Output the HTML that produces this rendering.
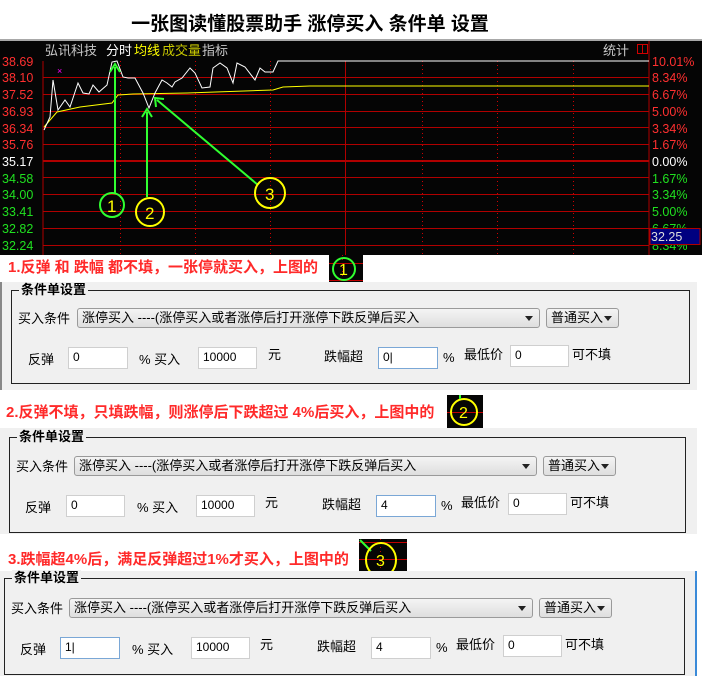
<!DOCTYPE html>
<html><head><meta charset="utf-8"><style>
*{margin:0;padding:0;box-sizing:border-box}
body{width:702px;height:690px;background:#fff;position:relative;overflow:hidden;font-family:"Liberation Sans","Noto Sans CJK SC",sans-serif;}
.abs{position:absolute}
.title{left:0;width:620px;top:9px;text-align:center;font-size:19px;font-weight:bold;color:#000;}
.cap{font-size:15px;font-weight:bold;color:#ff2a2a;white-space:nowrap;line-height:18px}
.panel{background:#f0f0f0;left:0;width:697px}
.grp{border:1px solid #222;}
.glab{position:absolute;left:7px;top:-9px;background:#f0f0f0;padding:0 2px;font-size:13px;font-weight:bold;line-height:16px}
.t{position:absolute;font-size:13px;line-height:16px;white-space:nowrap;color:#000}
.combo{position:absolute;height:20px;border:1px solid #9a9a9a;border-radius:3px;background:linear-gradient(#f4f4f4,#dedede);font-size:13px;line-height:18px;padding-left:4px;white-space:nowrap}
.combo:after{content:"";position:absolute;right:6px;top:7px;border-left:4px solid transparent;border-right:4px solid transparent;border-top:5px solid #222}
.inp{position:absolute;height:22px;border:1px solid #cfcfcf;background:#fff;font-size:12px;line-height:18px;padding-left:4px}
.inp.f{border-color:#7aa7d6}
</style></head><body>
<div class="abs title">一张图读懂股票助手 涨停买入 条件单 设置</div>

<svg class="abs" style="left:0;top:39px" width="702" height="216" viewBox="0 39 702 216">
<rect x="0" y="39" width="702" height="216" fill="#050505"/>
<rect x="0" y="39" width="702" height="2" fill="#a8a8a8"/>
<g fill="none" stroke="#b00000" stroke-width="1">
<line x1="43" y1="61" x2="43" y2="255"/>
<line x1="649" y1="41" x2="649" y2="255"/>
<line x1="43" y1="77.5" x2="649" y2="77.5"/><line x1="43" y1="94.5" x2="649" y2="94.5"/>
<line x1="43" y1="111.5" x2="649" y2="111.5"/><line x1="43" y1="127.5" x2="649" y2="127.5"/>
<line x1="43" y1="144.5" x2="649" y2="144.5"/>
<line x1="43" y1="177.5" x2="649" y2="177.5"/><line x1="43" y1="194.5" x2="649" y2="194.5"/>
<line x1="43" y1="211.5" x2="649" y2="211.5"/><line x1="43" y1="228.5" x2="700" y2="228.5"/>
<line x1="43" y1="245.5" x2="649" y2="245.5"/>
<line x1="43" y1="161" x2="649" y2="161" stroke-width="2"/>
<line x1="345.5" y1="61" x2="345.5" y2="255"/>
</g>
<g stroke="#d00000" stroke-width="1" stroke-dasharray="1,3">
<line x1="120.5" y1="61" x2="120.5" y2="255"/><line x1="195.5" y1="61" x2="195.5" y2="255"/>
<line x1="270.5" y1="61" x2="270.5" y2="255"/><line x1="422.5" y1="61" x2="422.5" y2="255"/>
<line x1="497.5" y1="61" x2="497.5" y2="255"/><line x1="573.5" y1="61" x2="573.5" y2="255"/>
</g>
<polyline fill="none" stroke="#ffff00" stroke-width="1" points="44,127 57,112 80,107 112,103 118,95 133,94 187,93 273,90 283,87 310,86 649,86"/>
<polyline fill="none" stroke="#fff" stroke-width="1" points="44,130 50,117 53,80 58,110 65,100 70,107 78,83 83,93 89,94 93,85 99,92 107,85 112,62 117,61 123,77 128,78 135,78 143,93 149,108 155,93 162,80 167,83 172,87 175,82 182,78 190,68 195,73 202,88 210,87 213,68 220,63 227,68 233,83 237,63 245,67 255,80 260,68 265,72 273,72 278,61 649,61"/>
<text x="57" y="74" fill="#ff00ff" font-size="9">×</text>
<g font-family="Liberation Sans,Noto Sans CJK SC,sans-serif" font-size="13">
<text x="45" y="55" fill="#c8c8c8">弘讯科技</text>
<text x="106" y="55" fill="#fff">分时</text>
<text x="134" y="55" fill="#ffff00">均线</text>
<text x="162" y="55" fill="#c8c800">成交量</text>
<text x="202" y="55" fill="#c8c8c8">指标</text>
<text x="603" y="55" fill="#c8c8c8">统计</text>
</g>
<rect x="637.5" y="44.5" width="10" height="9" fill="none" stroke="#d00000"/><line x1="642.5" y1="44" x2="642.5" y2="54" stroke="#d00000"/>
<g font-family="Liberation Sans,sans-serif" font-size="12.5">
<text x="2" y="66" fill="#ff3030">38.69</text><text x="2" y="82" fill="#ff3030">38.10</text>
<text x="2" y="99" fill="#ff3030">37.52</text><text x="2" y="116" fill="#ff3030">36.93</text>
<text x="2" y="133" fill="#ff3030">36.34</text><text x="2" y="149" fill="#ff3030">35.76</text>
<text x="2" y="166" fill="#fff">35.17</text><text x="2" y="183" fill="#20e020">34.58</text>
<text x="2" y="199" fill="#20e020">34.00</text><text x="2" y="216" fill="#20e020">33.41</text>
<text x="2" y="233" fill="#20e020">32.82</text><text x="2" y="250" fill="#20e020">32.24</text>
<text x="652" y="66" fill="#ff3030">10.01%</text><text x="652" y="82" fill="#ff3030">8.34%</text>
<text x="652" y="99" fill="#ff3030">6.67%</text><text x="652" y="116" fill="#ff3030">5.00%</text>
<text x="652" y="133" fill="#ff3030">3.34%</text><text x="652" y="149" fill="#ff3030">1.67%</text>
<text x="652" y="166" fill="#fff">0.00%</text><text x="652" y="183" fill="#20e020">1.67%</text>
<text x="652" y="199" fill="#20e020">3.34%</text><text x="652" y="216" fill="#20e020">5.00%</text>
<text x="652" y="233" fill="#20e020">6.67%</text><text x="652" y="250" fill="#20e020">8.34%</text>
</g>
<rect x="650" y="228.5" width="50" height="16" fill="#000080" stroke="#b00000"/>
<text x="651" y="241" fill="#ddd" font-family="Liberation Sans,sans-serif" font-size="12.5">32.25</text>
<g stroke="#30ff30" stroke-width="2" fill="none">
<line x1="115" y1="193" x2="115" y2="67"/><polyline points="110,72 115,64 120,72"/>
<line x1="147" y1="197" x2="147" y2="112"/><polyline points="142,117 147,109 152,117"/>
<line x1="258" y1="185" x2="157" y2="100"/><polyline points="156,107 155,98 164,99"/>
</g>
<circle cx="112" cy="205" r="12" fill="none" stroke="#30ff30" stroke-width="2"/>
<text x="107" y="212" fill="#ffff00" font-size="17" font-family="Liberation Sans,sans-serif">1</text>
<circle cx="150" cy="212" r="14" fill="none" stroke="#ffff00" stroke-width="2"/>
<text x="145" y="219" fill="#ffff00" font-size="17" font-family="Liberation Sans,sans-serif">2</text>
<circle cx="270" cy="193" r="15" fill="none" stroke="#ffff00" stroke-width="2"/>
<text x="265" y="200" fill="#ffff00" font-size="17" font-family="Liberation Sans,sans-serif">3</text>
</svg>

<!-- Section 1 -->
<div class="abs cap" style="left:8px;top:259px">1.反弹 和 跌幅 都不填，一张停就买入，上图的</div>
<svg class="abs" style="left:329px;top:255px" width="34" height="27"><rect width="34" height="27" fill="#050505"/><line x1="0" y1="8.5" x2="34" y2="8.5" stroke="#c00000"/><line x1="0" y1="25.5" x2="34" y2="25.5" stroke="#c00000"/><line x1="13.5" y1="0" x2="13.5" y2="27" stroke="#c00000" stroke-dasharray="1,3"/><circle cx="15" cy="14" r="11" fill="none" stroke="#30ff30" stroke-width="2"/><text x="10" y="20" fill="#ffff00" font-size="16" font-family="Liberation Sans,sans-serif">1</text></svg>
<div class="abs panel" style="top:282px;height:108px;border-left:2px solid #888"></div>
<div class="abs grp" style="left:11px;top:290px;width:679px;height:94px">
<div class="glab">条件单设置</div>
<div class="t" style="left:6px;top:20px">买入条件</div>
<div class="combo" style="left:65px;top:17px;width:463px">涨停买入 ----(涨停买入或者涨停后打开涨停下跌反弹后买入</div>
<div class="combo" style="left:534px;top:17px;width:73px">普通买入</div>
<div class="t" style="left:16px;top:61px">反弹</div>
<div class="inp" style="left:56px;top:56px;width:60px">0</div>
<div class="t" style="left:127px;top:61px">% 买入</div>
<div class="inp" style="left:186px;top:56px;width:59px">10000</div>
<div class="t" style="left:256px;top:56px">元</div>
<div class="t" style="left:312px;top:58px">跌幅超</div>
<div class="inp f" style="left:366px;top:56px;width:60px">0|</div>
<div class="t" style="left:431px;top:59px">%</div>
<div class="t" style="left:452px;top:56px">最低价</div>
<div class="inp" style="left:498px;top:54px;width:59px">0</div>
<div class="t" style="left:560px;top:56px">可不填</div>
</div>

<!-- Section 2 -->
<div class="abs cap" style="left:6px;top:404px">2.反弹不填，只填跌幅，则涨停后下跌超过 4%后买入，上图中的</div>
<svg class="abs" style="left:447px;top:395px" width="36" height="36"><rect width="36" height="36" fill="#050505"/><line x1="0" y1="17.5" x2="36" y2="17.5" stroke="#c00000"/><line x1="0" y1="34.5" x2="36" y2="34.5" stroke="#c00000"/><circle cx="17" cy="17" r="13" fill="none" stroke="#ffff00" stroke-width="2"/><text x="12" y="23" fill="#ffff00" font-size="16" font-family="Liberation Sans,sans-serif">2</text><line x1="13" y1="0" x2="13" y2="4" stroke="#30ff30" stroke-width="2"/></svg>
<div class="abs panel" style="top:428px;height:106px"></div>
<div class="abs grp" style="left:9px;top:437px;width:677px;height:96px">
<div class="glab">条件单设置</div>
<div class="t" style="left:6px;top:21px">买入条件</div>
<div class="combo" style="left:64px;top:18px;width:463px">涨停买入 ----(涨停买入或者涨停后打开涨停下跌反弹后买入</div>
<div class="combo" style="left:533px;top:18px;width:73px">普通买入</div>
<div class="t" style="left:15px;top:62px">反弹</div>
<div class="inp" style="left:56px;top:57px;width:59px">0</div>
<div class="t" style="left:127px;top:62px">% 买入</div>
<div class="inp" style="left:186px;top:57px;width:59px">10000</div>
<div class="t" style="left:255px;top:57px">元</div>
<div class="t" style="left:312px;top:59px">跌幅超</div>
<div class="inp f" style="left:366px;top:57px;width:60px">4</div>
<div class="t" style="left:431px;top:60px">%</div>
<div class="t" style="left:451px;top:57px">最低价</div>
<div class="inp" style="left:498px;top:55px;width:59px">0</div>
<div class="t" style="left:560px;top:57px">可不填</div>
</div>

<!-- Section 3 -->
<div class="abs cap" style="left:8px;top:551px">3.跌幅超4%后，满足反弹超过1%才买入，上图中的</div>
<svg class="abs" style="left:359px;top:539px" width="48" height="39"><rect width="48" height="39" fill="#050505"/><line x1="0" y1="3.5" x2="48" y2="3.5" stroke="#c00000"/><line x1="0" y1="20.5" x2="48" y2="20.5" stroke="#c00000"/><line x1="0" y1="37.5" x2="48" y2="37.5" stroke="#c00000"/><line x1="21.5" y1="0" x2="21.5" y2="39" stroke="#c00000" stroke-dasharray="1,3"/><line x1="1" y1="1" x2="12" y2="12" stroke="#30ff30" stroke-width="2"/><ellipse cx="22" cy="21" rx="15" ry="17" fill="none" stroke="#ffff00" stroke-width="2"/><text x="17" y="27" fill="#ffff00" font-size="16" font-family="Liberation Sans,sans-serif">3</text></svg>
<div class="abs panel" style="top:571px;height:105px;border-right:2px solid #3a8ad8"></div>
<div class="abs grp" style="left:4px;top:578px;width:681px;height:97px">
<div class="glab">条件单设置</div>
<div class="t" style="left:6px;top:22px">买入条件</div>
<div class="combo" style="left:64px;top:19px;width:464px">涨停买入 ----(涨停买入或者涨停后打开涨停下跌反弹后买入</div>
<div class="combo" style="left:534px;top:19px;width:73px">普通买入</div>
<div class="t" style="left:15px;top:63px">反弹</div>
<div class="inp f" style="left:55px;top:58px;width:60px">1|</div>
<div class="t" style="left:127px;top:63px">% 买入</div>
<div class="inp" style="left:186px;top:58px;width:59px">10000</div>
<div class="t" style="left:255px;top:58px">元</div>
<div class="t" style="left:312px;top:60px">跌幅超</div>
<div class="inp" style="left:366px;top:58px;width:60px">4</div>
<div class="t" style="left:431px;top:61px">%</div>
<div class="t" style="left:451px;top:58px">最低价</div>
<div class="inp" style="left:498px;top:56px;width:59px">0</div>
<div class="t" style="left:560px;top:58px">可不填</div>
</div>
</body></html>
